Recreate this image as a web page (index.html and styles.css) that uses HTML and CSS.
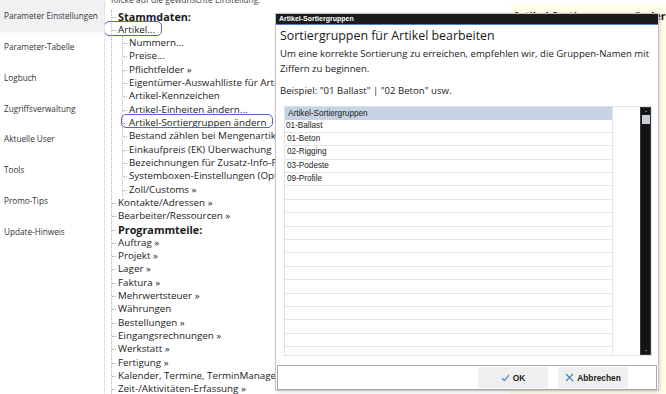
FILE: index.html
```html
<!DOCTYPE html>
<html>
<head>
    <title>Parameter Einstellungen</title>
    <link rel="stylesheet" href="styles.css">
</head>
<body>
    <div class="page">
        <nav class="sidebar">
            <div class="nav-item active">Parameter Einstellungen</div>
            <div class="nav-item">Parameter-Tabelle</div>
            <div class="nav-item">Logbuch</div>
            <div class="nav-item">Zugriffsverwaltung</div>
            <div class="nav-item">Aktuelle User</div>
            <div class="nav-item">Tools</div>
            <div class="nav-item">Promo-Tips</div>
            <div class="nav-item">Update-Hinweis</div>
        </nav>

        <div class="content">
            <div class="hint">Klicke auf die gewünschte Einstellung.</div>
            <div class="tree">
                <div class="row bold">Stammdaten:</div>
                <div class="row mark-short">Artikel...</div>
                <div class="sub">
                    <div class="row">Nummern...</div>
                    <div class="row">Preise...</div>
                    <div class="row">Pflichtfelder »</div>
                    <div class="row">Eigentümer-Auswahlliste für Artikel</div>
                    <div class="row">Artikel-Kennzeichen</div>
                    <div class="row">Artikel-Einheiten ändern...</div>
                    <div class="row mark-long">Artikel-Sortiergruppen ändern</div>
                    <div class="row">Bestand zählen bei Mengenartikeln</div>
                    <div class="row">Einkaufpreis (EK) Überwachung</div>
                    <div class="row">Bezeichnungen für Zusatz-Info-Felder</div>
                    <div class="row">Systemboxen-Einstellungen (Optionen)</div>
                    <div class="row">Zoll/Customs »</div>
                </div>
                <div class="row">Kontakte/Adressen »</div>
                <div class="row">Bearbeiter/Ressourcen »</div>
                <div class="row bold">Programmteile:</div>
                <div class="row">Auftrag »</div>
                <div class="row">Projekt »</div>
                <div class="row">Lager »</div>
                <div class="row">Faktura »</div>
                <div class="row">Mehrwertsteuer »</div>
                <div class="row">Währungen</div>
                <div class="row">Bestellungen »</div>
                <div class="row">Eingangsrechnungen »</div>
                <div class="row">Werkstatt »</div>
                <div class="row">Fertigung »</div>
                <div class="row">Kalender, Termine, TerminManager, Aufgaben »</div>
                <div class="row">Zeit-/Aktivitäten-Erfassung »</div>
            </div>
        </div>

        <aside class="detail">
            <div class="detail-title">Artikel-Sortiergruppen ändern</div>
        </aside>
    </div>

    <div class="dialog">
        <div class="dialog-titlebar">Artikel-Sortiergruppen</div>
        <div class="dialog-body">
            <h2>Sortiergruppen für Artikel bearbeiten</h2>
            <p>Um eine korrekte Sortierung zu erreichen, empfehlen wir, die Gruppen-Namen mit Ziffern zu beginnen.</p>
            <p class="example">Beispiel: "01 Ballast" | "02 Beton" usw.</p>

            <div class="grid">
                <div class="grid-table">
                    <div class="grid-head">Artikel-Sortiergruppen</div>
                    <div class="grid-row first">01-Ballast</div>
                    <div class="grid-row">01-Beton</div>
                    <div class="grid-row">02-Rigging</div>
                    <div class="grid-row">03-Podeste</div>
                    <div class="grid-row">09-Profile</div>
                    <div class="grid-row"></div>
                    <div class="grid-row"></div>
                    <div class="grid-row"></div>
                    <div class="grid-row"></div>
                    <div class="grid-row"></div>
                    <div class="grid-row"></div>
                    <div class="grid-row"></div>
                    <div class="grid-row"></div>
                    <div class="grid-row"></div>
                    <div class="grid-row"></div>
                    <div class="grid-row"></div>
                    <div class="grid-row"></div>
                    <div class="grid-row"></div>
                </div>
                <div class="grid-empty"></div>
                <div class="scrollbar">
                    <span class="arrow"></span>
                    <span class="thumb"></span>
                    <span class="spacer"></span>
                    <span class="arrow"></span>
                </div>
            </div>
        </div>
        <div class="dialog-footer">
            <button class="btn">
                <svg width="9" height="8" viewBox="0 0 9 8"><path d="M1 4.2 L3.4 6.6 L8 1.2" fill="none" stroke="#3d7cc9" stroke-width="1.1"/></svg>
                OK
            </button>
            <button class="btn">
                <svg width="9" height="9" viewBox="0 0 9 9"><path d="M1 1 L8 8 M8 1 L1 8" fill="none" stroke="#3d7cc9" stroke-width="1.1"/></svg>
                Abbrechen
            </button>
        </div>
    </div>
</body>
</html>
```

FILE: styles.css
```css
body {
    margin: 0;
    width: 666px;
    height: 394px;
    overflow: hidden;
    font-family: "Open Sans", "Noto Sans", sans-serif;
    color: #1a1a1a;
    background: #fff;
    position: relative;
}
.page {
    display: flex;
    height: 394px;
}

/* left navigation */
.sidebar {
    width: 104px;
    flex-shrink: 0;
    font-size: 8.2px;
    color: #333;
    border-right: 1px solid #e8e8e8;
}
.nav-item {
    height: 30.85px;
    line-height: 32px;
    padding-left: 4px;
    white-space: nowrap;
}
.nav-item.active {
    background: #f1f1f3;
    box-shadow: 1px 1px 2px rgba(0,0,0,0.08);
    margin-right: 1px;
}

/* settings tree */
.content {
    flex: 1;
    overflow: hidden;
    padding-left: 6px;
    font-size: 9.8px;
}
.hint {
    font-size: 8.5px;
    color: #444;
    height: 10px;
    line-height: 10px;
    margin-top: -5px;
    padding-bottom: 4.5px;
    white-space: nowrap;
}
.tree {
    border-left: 1px dotted #b5b5b5;
}
.row {
    position: relative;
    height: 13.32px;
    line-height: 13.32px;
    padding-left: 6px;
    white-space: nowrap;
}
.row::before {
    content: '';
    position: absolute;
    left: 0;
    top: 7px;
    width: 4px;
    border-top: 1px dotted #b5b5b5;
}
.row.bold {
    font-weight: bold;
    font-size: 10.8px;
}
.sub {
    margin-left: 10px;
    border-left: 1px dotted #b5b5b5;
}
.mark-short::after,
.mark-long::after {
    content: '';
    position: absolute;
    border: 1.4px solid #5b5fcf;
    border-radius: 5px;
}
.mark-short::after {
    left: -8px;
    top: -1.5px;
    width: 56px;
    height: 12.5px;
}
.mark-long::after {
    left: -2px;
    top: -2.5px;
    width: 150px;
    height: 12px;
}

/* right detail panel */
.detail {
    width: 156px;
    flex-shrink: 0;
    margin-top: 4px;
    background: #fffde8;
}
.detail-title {
    font-size: 10.5px;
    font-weight: bold;
    padding: 5px 0 0 3px;
    white-space: nowrap;
}

/* dialog */
.dialog {
    position: absolute;
    left: 275px;
    top: 13px;
    width: 382px;
    height: 376px;
    background: #fff;
    border: 1px solid #c4c4c4;
    box-shadow: 1px 1px 3px rgba(0,0,0,0.15);
}
.dialog-titlebar {
    height: 10px;
    line-height: 10px;
    background: #1b1b1b;
    border-bottom: 1px solid #4f7fc4;
    color: #fff;
    font-family: "Liberation Sans", Arial, sans-serif;
    font-size: 7px;
    font-weight: bold;
    padding-left: 3px;
}
.dialog-body {
    padding: 2px 0 0 4px;
}
.dialog-body h2 {
    margin: 0;
    font-size: 12.4px;
    font-weight: normal;
    line-height: 18px;
}
.dialog-body p {
    margin: 2px 0 0;
    font-size: 9.6px;
    line-height: 14.5px;
    width: 372px;
}
.dialog-body p.example {
    margin-top: 8px;
}
.grid {
    display: flex;
    margin: 7px 0 0 4px;
    width: 366px;
    height: 248px;
    border: 1px solid #dde2e8;
    overflow: hidden;
}
.grid-table {
    width: 327px;
    border-right: 1px solid #e3e7ec;
    font-family: "Liberation Sans", Arial, sans-serif;
    font-size: 8.2px;
    color: #222;
}
.grid-head {
    height: 13px;
    line-height: 13px;
    background: #c6d3e2;
    padding-left: 3px;
}
.grid-row {
    height: 12.4px;
    line-height: 12.4px;
    border-bottom: 1px solid #dfe5ed;
    padding-left: 2px;
    overflow: hidden;
}
.grid-row.first {
    padding-left: 1px;
}
.grid-empty {
    flex: 1;
}
.scrollbar {
    width: 9px;
    background: #141414;
    border: 1px solid #3a3a3a;
    display: flex;
    flex-direction: column;
    align-items: center;
}
.scrollbar .arrow {
    width: 2px;
    height: 1px;
    background: #4a78c0;
    margin: 3px 0;
}
.scrollbar .thumb {
    width: 8px;
    height: 9px;
    background: #c9cfd6;
}
.scrollbar .spacer {
    flex: 1;
}
.dialog-footer {
    position: absolute;
    left: 1px;
    right: 1px;
    bottom: 0;
    height: 23px;
    border: 1px solid #a8a8a8;
    display: flex;
    justify-content: flex-end;
    align-items: center;
    gap: 10px;
    padding-right: 28px;
}
.btn {
    width: 70px;
    height: 21px;
    background: #efefef;
    border: none;
    font-family: "Liberation Sans", Arial, sans-serif;
    font-size: 8.4px;
    font-weight: bold;
    color: #222;
    display: flex;
    align-items: center;
    justify-content: center;
    gap: 3px;
    padding: 0;
}
```
